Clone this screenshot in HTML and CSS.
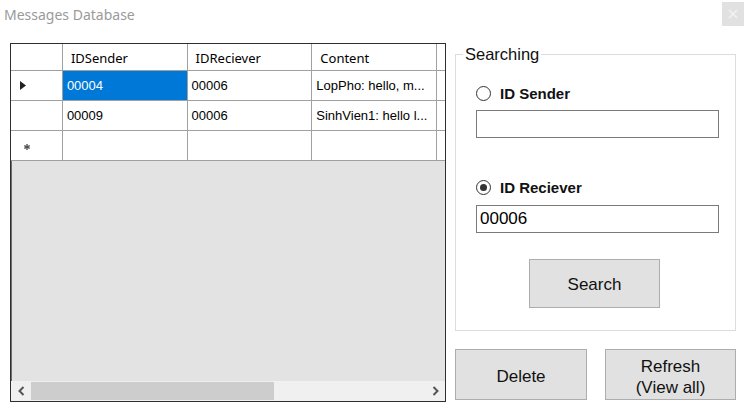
FILE: index.html
```html
<!DOCTYPE html>
<html>
<head>
<meta charset="utf-8">
<link rel="stylesheet" href="styles.css">
</head>
<body>
<div class="window">
  <div class="titlebar">
    <span class="title">Messages Database</span>
    <span class="close">×</span>
  </div>
  <div class="content">
    <div class="grid">
      <div class="row head">
        <div class="rh"></div>
        <div class="c">IDSender</div>
        <div class="c">IDReciever</div>
        <div class="c">Content</div>
        <div class="c tail"></div>
      </div>
      <div class="row">
        <div class="rh"><svg width="6" height="9" viewBox="0 0 6 9"><path d="M0 0 L6 4.5 L0 9 Z" fill="#222"/></svg></div>
        <div class="c sel">00004</div>
        <div class="c">00006</div>
        <div class="c">LopPho: hello, m...</div>
        <div class="c tail"></div>
      </div>
      <div class="row">
        <div class="rh"></div>
        <div class="c">00009</div>
        <div class="c">00006</div>
        <div class="c">SinhVien1: hello l...</div>
        <div class="c tail"></div>
      </div>
      <div class="row">
        <div class="rh star"><svg width="6" height="6" viewBox="0 0 6 6"><g stroke="#555" stroke-width="1.4"><path d="M3 0 V6"/><path d="M0.3 1.5 L5.7 4.5"/><path d="M0.3 4.5 L5.7 1.5"/></g></svg></div>
        <div class="c"></div>
        <div class="c"></div>
        <div class="c"></div>
        <div class="c tail"></div>
      </div>
      <div class="empty"></div>
      <div class="hscroll">
        <span class="arrow"><svg width="7" height="10" viewBox="0 0 7 10"><path d="M5.5 1 L1.5 5 L5.5 9" fill="none" stroke="#555" stroke-width="2"/></svg></span>
        <div class="track"><div class="thumb"></div></div>
        <span class="arrow"><svg width="7" height="10" viewBox="0 0 7 10"><path d="M1.5 1 L5.5 5 L1.5 9" fill="none" stroke="#555" stroke-width="2"/></svg></span>
      </div>
    </div>
    <div class="side">
      <fieldset class="group">
        <legend>Searching</legend>
        <label class="radio first"><span class="dot"></span><span>ID Sender</span></label>
        <div class="textbox"></div>
        <label class="radio second"><span class="dot checked"></span><span>ID Reciever</span></label>
        <div class="textbox filled">00006</div>
        <button class="btn search">Search</button>
      </fieldset>
      <div class="actions">
        <button class="btn delete">Delete</button>
        <button class="btn refresh">Refresh<br>(View all)</button>
      </div>
    </div>
  </div>
</div>
</body>
</html>
```
FILE: styles.css
```css
html, body {
  margin: 0;
  padding: 0;
  background: #ffffff;
}
.window {
  width: 748px;
  height: 412px;
  background: #ffffff;
  font-family: "Liberation Sans", Arial, sans-serif;
  color: #000;
}
.titlebar {
  height: 30px;
  display: flex;
  justify-content: space-between;
  align-items: flex-start;
}
.title {
  font-family: "Noto Sans", sans-serif;
  font-size: 14px;
  color: #9a9a9a;
  margin: 5px 0 0 4px;
  line-height: 20px;
}
.close {
  width: 22px;
  height: 24px;
  margin: 2px 4px 0 0;
  background: #e1e1e1;
  color: #f2f2f2;
  font-size: 16px;
  line-height: 24px;
  text-align: center;
  font-family: "DejaVu Sans", sans-serif;
}
.content {
  display: flex;
  align-items: flex-start;
  padding: 13px 0 0 10px;
  gap: 9px;
}
.grid {
  box-sizing: border-box;
  width: 436px;
  height: 359px;
  border: 1px solid #2f2f2f;
  box-shadow: inset 1px 1px 0 #6e6e6e;
  display: flex;
  flex-direction: column;
  background: #e3e3e3;
}
.row {
  display: flex;
  height: 30px;
  background: #fff;
  flex: none;
}
.row.head {
  height: 27px;
  font-family: "Noto Sans", sans-serif;
  font-size: 13px;
}
.row > div {
  box-sizing: border-box;
  border-right: 1px solid #a0a0a0;
  border-bottom: 1px solid #a0a0a0;
  display: flex;
  align-items: center;
}
.head > div {
  padding-top: 2px;
}
.rh {
  width: 52px;
  padding-left: 9px;
}
.rh.star {
  padding-left: 13px;
  padding-top: 2px;
}
.c {
  width: 125px;
  padding-left: 4px;
  font-size: 13px;
  white-space: nowrap;
  overflow: hidden;
}
.head .c {
  padding-left: 8px;
  font-size: 13px;
}
.c.tail {
  width: 8px;
  padding: 0;
  border-right: none;
}
.c.sel {
  background: #0078d7;
  color: #fff;
  border-right-color: #a0a0a0;
}
.empty {
  flex: 1;
}
.hscroll {
  height: 20px;
  flex: none;
  display: flex;
  align-items: stretch;
  background: #f0f0f0;
}
.arrow {
  width: 20px;
  display: flex;
  align-items: center;
  justify-content: center;
}
.track {
  flex: 1;
  display: flex;
  padding: 1px 0;
}
.thumb {
  width: 243px;
  background: #cdcdcd;
}
.side {
  width: 281px;
  margin-top: 1px;
  display: flex;
  flex-direction: column;
}
.group {
  margin: 0;
  border: 1px solid #dcdcdc;
  padding: 0 15px 22px 20px;
  display: flex;
  flex-direction: column;
  align-items: flex-start;
}
.group legend {
  font-size: 16.5px;
  line-height: 20px;
  padding: 0 2px;
  margin-left: -13px;
  color: #111;
}
.radio {
  display: flex;
  align-items: center;
  gap: 9px;
  height: 16px;
  font-weight: bold;
  font-size: 15px;
  color: #111;
}
.radio.first {
  margin-top: 21px;
}
.radio.second {
  margin-top: 41px;
}
.dot {
  box-sizing: border-box;
  width: 15px;
  height: 15px;
  border: 1.5px solid #333;
  border-radius: 50%;
  background: #fff;
  display: flex;
  align-items: center;
  justify-content: center;
}
.dot.checked::after {
  content: "";
  width: 7px;
  height: 7px;
  border-radius: 50%;
  background: #333;
}
.textbox {
  box-sizing: border-box;
  width: 243px;
  height: 28px;
  border: 1px solid #7a7a7a;
  background: #fff;
  margin-top: 9px;
  font-size: 17px;
  line-height: 26px;
  padding-left: 3px;
}
.textbox.filled {
  margin-top: 10px;
}
.btn {
  box-sizing: border-box;
  background: #e1e1e1;
  border: 1px solid #adadad;
  font-family: "Liberation Sans", Arial, sans-serif;
  font-size: 17px;
  color: #111;
  padding: 0;
  margin: 0;
}
.search {
  width: 131px;
  height: 49px;
  margin: 26px 0 0 53px;
  padding-top: 2px;
}
.actions {
  display: flex;
  gap: 18px;
  margin-top: 18px;
}
.delete {
  width: 132px;
  height: 51px;
  padding-top: 5px;
}
.refresh {
  width: 131px;
  height: 51px;
  line-height: 21px;
  padding-top: 5px;
}
```
